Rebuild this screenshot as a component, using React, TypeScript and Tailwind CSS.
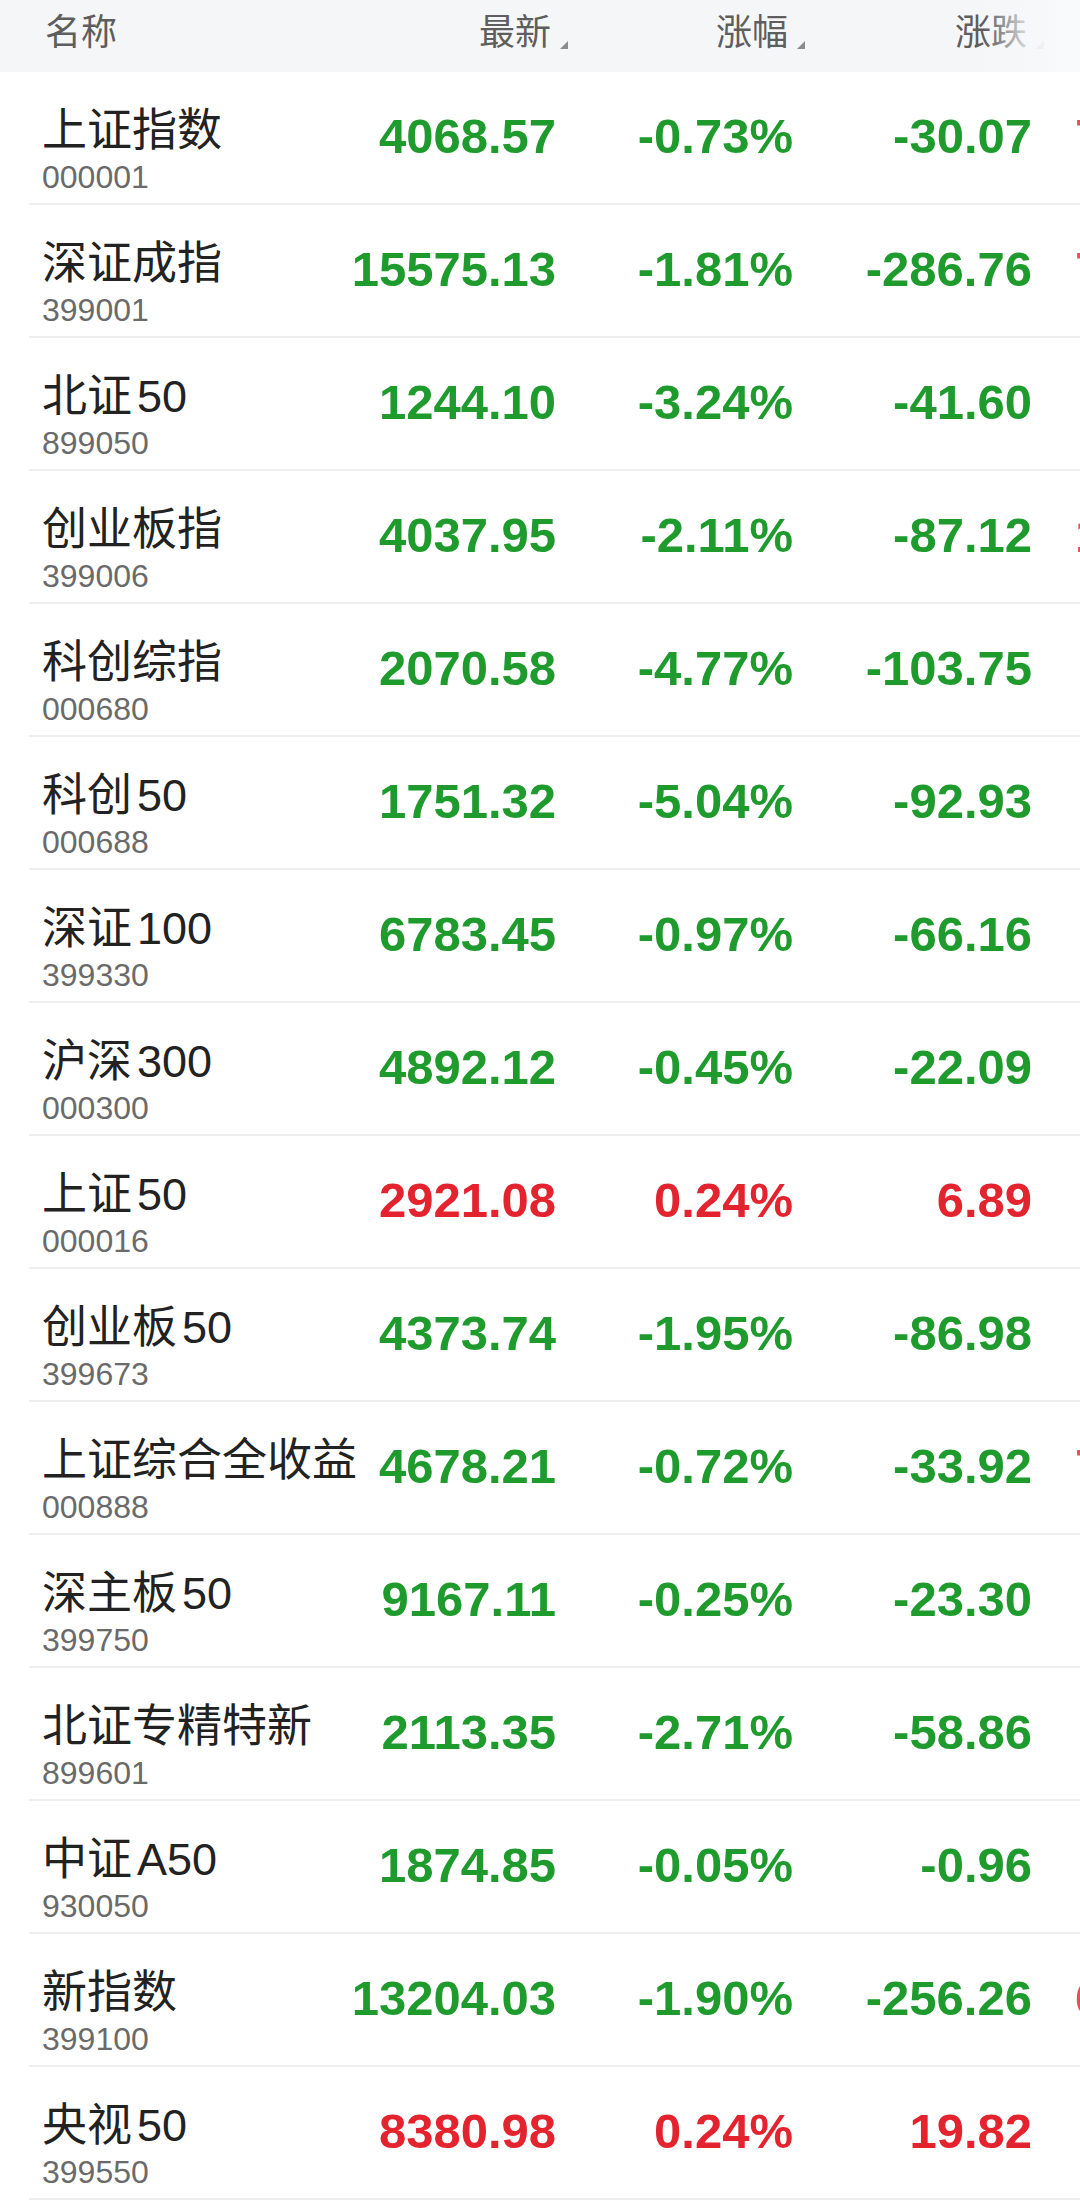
const GREEN = "text-[#1f9b2e]";
const RED = "text-[#e3232e]";

type Row = {
  name: string;
  code: string;
  price: string;
  pct: string;
  chg: string;
  up?: boolean;
  peek?: string;
};

const ROWS: Row[] = [
  { name: "上证指数", code: "000001", price: "4068.57", pct: "-0.73%", chg: "-30.07", peek: "7" },
  { name: "深证成指", code: "399001", price: "15575.13", pct: "-1.81%", chg: "-286.76", peek: "7" },
  { name: "北证 50", code: "899050", price: "1244.10", pct: "-3.24%", chg: "-41.60" },
  { name: "创业板指", code: "399006", price: "4037.95", pct: "-2.11%", chg: "-87.12", peek: "1" },
  { name: "科创综指", code: "000680", price: "2070.58", pct: "-4.77%", chg: "-103.75" },
  { name: "科创 50", code: "000688", price: "1751.32", pct: "-5.04%", chg: "-92.93" },
  { name: "深证 100", code: "399330", price: "6783.45", pct: "-0.97%", chg: "-66.16" },
  { name: "沪深 300", code: "000300", price: "4892.12", pct: "-0.45%", chg: "-22.09" },
  { name: "上证 50", code: "000016", price: "2921.08", pct: "0.24%", chg: "6.89", up: true },
  { name: "创业板 50", code: "399673", price: "4373.74", pct: "-1.95%", chg: "-86.98" },
  { name: "上证综合全收益", code: "000888", price: "4678.21", pct: "-0.72%", chg: "-33.92", peek: "7" },
  { name: "深主板 50", code: "399750", price: "9167.11", pct: "-0.25%", chg: "-23.30" },
  { name: "北证专精特新", code: "899601", price: "2113.35", pct: "-2.71%", chg: "-58.86" },
  { name: "中证 A50", code: "930050", price: "1874.85", pct: "-0.05%", chg: "-0.96" },
  { name: "新指数", code: "399100", price: "13204.03", pct: "-1.90%", chg: "-256.26", peek: "6" },
  { name: "央视 50", code: "399550", price: "8380.98", pct: "0.24%", chg: "19.82", up: true },
];

const NUM_FONT = "font-['Liberation_Sans',Arial,sans-serif] font-bold text-[49px] leading-none";
const CJK_FONT = "font-['Liberation_Sans','Noto_Sans_CJK_SC',sans-serif]";

function SortMark() {
  return (
    <svg width="8" height="8" viewBox="0 0 8 8" className="absolute left-full bottom-[2px] ml-[9px]">
      <polygon points="8,0 8,8 0,8" fill="#8c8c8c" />
    </svg>
  );
}

function HeadCell({ label, width }: { label: string; width: string }) {
  return (
    <div className={`${width} flex justify-end pr-[5px]`}>
      <span className="relative">
        {label}
        <SortMark />
      </span>
    </div>
  );
}

function Header() {
  return (
    <div className={`relative flex h-[72px] items-center bg-[#f5f6f8] pb-[6px] pl-[45px] text-[36px] leading-none text-[#5e5e5e] ${CJK_FONT}`}>
      <div className="w-[317px]">名称</div>
      <HeadCell label="最新" width="w-[194px]" />
      <HeadCell label="涨幅" width="w-[237px]" />
      <HeadCell label="涨跌" width="w-[239px]" />
      <div className="pointer-events-none absolute inset-y-0 right-0 w-[95px] bg-gradient-to-r from-[#f5f6f8]/0 via-[#f7f8fa]/90 to-[#f9fafb]" />
    </div>
  );
}

function Name({ text }: { text: string }) {
  const [cn, tail] = text.split(" ");
  return (
    <div className={`text-[45px] leading-[46px] text-[#222] ${CJK_FONT}`}>
      {cn}
      {tail ? <span className="ml-[5px]">{tail}</span> : null}
    </div>
  );
}

function QuoteRow({ row }: { row: Row }) {
  const color = row.up ? RED : GREEN;
  return (
    <div className="flex flex-col">
      <div className="flex h-[131px] pl-[42px]">
        <div className="w-[320px] shrink-0 pt-[36px] whitespace-nowrap">
          <Name text={row.name} />
          <div className="mt-[7px] font-['Liberation_Sans',Arial,sans-serif] text-[32px] leading-[32px] text-[#6a6a6a]">
            {row.code}
          </div>
        </div>
        <div className={`flex w-[194px] shrink-0 items-center justify-end pb-[2px] ${NUM_FONT} ${color}`}>{row.price}</div>
        <div className={`flex w-[237px] shrink-0 items-center justify-end pb-[2px] ${NUM_FONT} ${color}`}>{row.pct}</div>
        <div className={`flex w-[239px] shrink-0 items-center justify-end pb-[2px] ${NUM_FONT} ${color}`}>{row.chg}</div>
        {row.peek ? (
          <div className={`flex shrink-0 items-center pb-[2px] pl-[43px] opacity-80 ${NUM_FONT} ${RED}`}>{row.peek}</div>
        ) : null}
      </div>
      <div className="ml-[29px] h-[2px] bg-[#eeeeee]" />
    </div>
  );
}

export default function App() {
  return (
    <div className="h-[2206px] w-[1080px] overflow-hidden bg-white">
      <Header />
      {ROWS.map((r) => (
        <QuoteRow key={r.code} row={r} />
      ))}
    </div>
  );
}
